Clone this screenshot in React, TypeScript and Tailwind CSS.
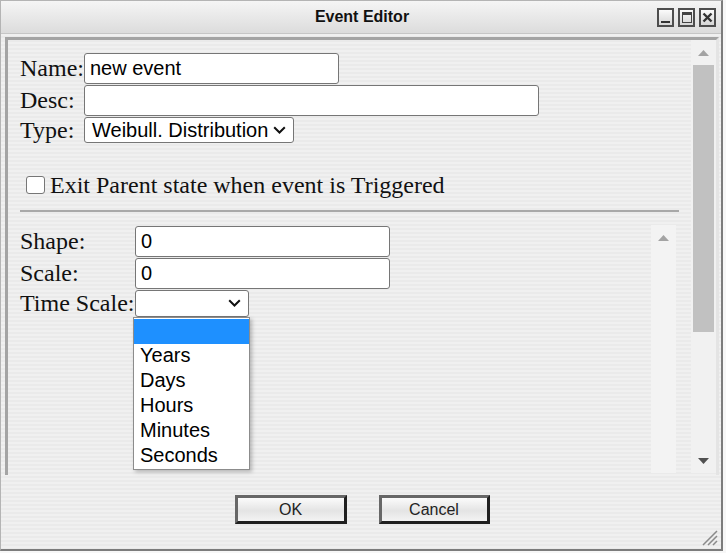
import React from "react";

const options = ["", "Years", "Days", "Hours", "Minutes", "Seconds"];

function Chevron() {
  return (
    <svg width="13" height="8" viewBox="0 0 13 8" className="shrink-0">
      <path d="M1.2 1.2 L6.5 6.5 L11.8 1.2" fill="none" stroke="#111" strokeWidth="2" />
    </svg>
  );
}

function TextBox({ value, className }: { value: string; className: string }) {
  return (
    <div
      className={`h-[31px] bg-white border border-[#767676] rounded-[3px] flex items-center px-[5px] text-[20px] text-black font-['Liberation_Sans',Arial,sans-serif] ${className}`}
    >
      {value}
    </div>
  );
}

function TriUp({ color }: { color: string }) {
  return (
    <svg width="11" height="6" viewBox="0 0 11 6">
      <polygon points="5.5,0 11,6 0,6" fill={color} />
    </svg>
  );
}

function WinButton({ children }: { children: React.ReactNode }) {
  return (
    <div className="w-[17px] h-[19px] border-2 border-[#4d4d4d] bg-linear-to-b from-[#fbfbfb] to-[#d6d6d6] flex items-center justify-center">
      {children}
    </div>
  );
}

export default function App() {
  const serif = "font-['Liberation_Serif','Times_New_Roman',serif] text-[24px] text-[#111] leading-none";
  return (
    <div className="w-[726px] h-[553px] bg-[#f7f7f7] font-['Liberation_Sans',Arial,sans-serif]">
      <div className="relative w-[723px] h-[551px] flex flex-col border-l border-t border-[#b4b4b4] border-r-2 border-b-2 border-r-[#7c7c7c] border-b-[#7c7c7c]">
        {/* title bar */}
        <div className="h-[33px] shrink-0 grid grid-cols-[1fr_auto_1fr] items-center bg-linear-to-b from-[#f5f5f5] to-[#dcdcdc] border-b border-[#c6c6c6]">
          <div />
          <div className="text-[16px] font-bold text-[#111] pl-[2px]">Event Editor</div>
          <div className="flex justify-end gap-[4px] pr-[5px]">
            <WinButton>
              <div className="w-[9px] h-[2px] bg-[#333] mt-[9px]" />
            </WinButton>
            <WinButton>
              <div className="w-[10px] h-[11px] border border-t-[3px] border-[#444]" />
            </WinButton>
            <WinButton>
              <svg width="11" height="11" viewBox="0 0 11 11">
                <path d="M1.5 1.5 L9.5 9.5 M9.5 1.5 L1.5 9.5" stroke="#333" strokeWidth="2.4" />
              </svg>
            </WinButton>
          </div>
        </div>

        {/* body */}
        <div className="flex-1 flex flex-col pl-[4px] pt-[3px] bg-[repeating-linear-gradient(180deg,#f0f0f0_0px,#f0f0f0_2px,#eaeaea_2px,#eaeaea_4px)]">
          <div className="w-[714px] h-[438px] flex border-l-[3px] border-t-[3px] border-r-[3px] border-l-[#a4a4a4] border-t-[#a4a4a4] border-r-[#e4e4e4]">
            {/* content */}
            <div className="flex-1 flex flex-col pl-[12px] pt-[12px]">
              <div className="h-[32px] flex items-center">
                <div className={`w-[64px] ${serif}`}>Name:</div>
                <TextBox value="new event" className="w-[255px]" />
              </div>
              <div className="h-[32px] flex items-center">
                <div className={`w-[64px] ${serif}`}>Desc:</div>
                <TextBox value="" className="w-[455px]" />
              </div>
              <div className="h-[28px] flex items-center">
                <div className={`w-[64px] ${serif}`}>Type:</div>
                <div className="w-[210px] h-[26px] bg-white border border-[#767676] rounded-[3px] flex items-center justify-between pl-[7px] pr-[7px] text-[20px] text-black">
                  <span>Weibull. Distribution</span>
                  <Chevron />
                </div>
              </div>

              <div className="h-[28px] mt-[27px] flex items-center pl-[6px]">
                <div className="w-[19px] h-[18px] bg-white border border-[#767676] rounded-[3px]" />
                <div className={`ml-[5px] ${serif}`}>Exit Parent state when event is Triggered</div>
              </div>

              <div className="mt-[11px] w-[659px] h-[2px] bg-[#a8a8a8]" />

              <div className="mt-[13px] mb-[2px] w-[656px] flex-1 flex">
                <div className="flex-1 flex flex-col">
                  <div className="h-[32px] flex items-center">
                    <div className={`w-[115px] ${serif}`}>Shape:</div>
                    <TextBox value="0" className="w-[255px]" />
                  </div>
                  <div className="h-[32px] flex items-center">
                    <div className={`w-[115px] ${serif}`}>Scale:</div>
                    <TextBox value="0" className="w-[255px]" />
                  </div>
                  <div className="h-[28px] flex items-center">
                    <div className={`w-[115px] ${serif}`}>Time Scale:</div>
                    <div className="relative">
                      <div className="w-[114px] h-[27px] bg-white border border-[#767676] rounded-[3px] flex items-center justify-end pr-[7px]">
                        <Chevron />
                      </div>
                      <div className="absolute top-[27px] left-[-2px] w-[117px] h-[153px] bg-white border border-[#8c8c8c] pt-[1px] shadow-[2px_2px_4px_rgba(0,0,0,0.25)] z-10">
                        {options.map((o, i) => (
                          <div
                            key={i}
                            className={`h-[25px] flex items-center pl-[6px] pb-[2px] text-[20px] text-black ${i === 0 ? "bg-[#1e90ff]" : ""}`}
                          >
                            {o}
                          </div>
                        ))}
                      </div>
                    </div>
                  </div>
                </div>
                <div className="w-[25px] bg-[#f3f3f3] flex flex-col">
                  <div className="h-[25px] flex items-center justify-center pt-[1px]">
                    <TriUp color="#a3a3a3" />
                  </div>
                </div>
              </div>
            </div>

            {/* outer scrollbar */}
            <div className="w-[25px] mb-[2px] bg-[#f1f1f1] flex flex-col">
              <div className="h-[25px] flex items-center justify-center">
                <TriUp color="#a3a3a3" />
              </div>
              <div className="mx-[2px] h-[267px] bg-[#c1c1c1]" />
              <div className="flex-1" />
              <div className="h-[25px] flex items-center justify-center">
                <div className="rotate-180 flex">
                  <TriUp color="#505050" />
                </div>
              </div>
            </div>
          </div>

          {/* buttons */}
          <div className="pt-[20px] flex justify-center gap-[32px] pr-[2px]">
            <div className="w-[112px] h-[29px] border-[3px] border-t-[#676767] border-l-[#676767] border-r-[#202020] border-b-[#202020] bg-[linear-gradient(#fbfbfb,#e4e4e4_55%,#f3f3f3)] flex items-center justify-center text-[16px] text-[#222]">
              OK
            </div>
            <div className="w-[111px] h-[29px] border-[3px] border-t-[#676767] border-l-[#676767] border-r-[#202020] border-b-[#202020] bg-[linear-gradient(#fbfbfb,#e4e4e4_55%,#f3f3f3)] flex items-center justify-center text-[16px] text-[#222]">
              Cancel
            </div>
          </div>
        </div>

        {/* resize grip */}
        <svg className="absolute right-[3px] bottom-[3px]" width="17" height="17" viewBox="0 0 17 17">
          <path d="M16 2 L2 16 M16 7 L7 16 M16 12 L12 16" stroke="#8a8a8a" strokeWidth="1.5" />
        </svg>
      </div>
    </div>
  );
}
